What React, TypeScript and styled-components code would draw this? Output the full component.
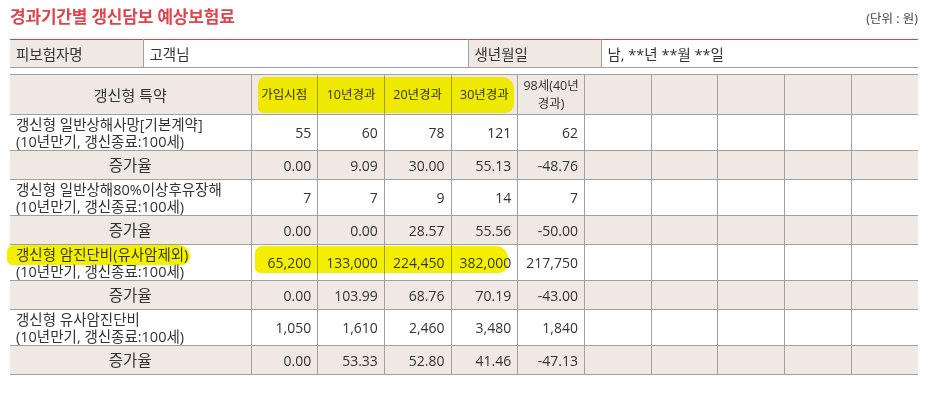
import React from "react";
import styled, { createGlobalStyle } from "styled-components";

const GlobalStyle = createGlobalStyle`
  body {
    margin: 0;
    background: #fff;
    font-family: "Open Sans", "Noto Sans CJK KR", sans-serif;
    color: #333;
  }
`;

const Page = styled.div`
  width: 908px;
  padding: 4px 28px 0 10px;
`;

const TitleBar = styled.div`
  display: flex;
  align-items: flex-end;
  justify-content: space-between;
  height: 24px;
  margin-bottom: 11px;
`;

const Title = styled.h2`
  margin: 0;
  font-size: 17px;
  font-weight: 700;
  color: #e0444b;
  letter-spacing: -0.2px;
`;

const Unit = styled.span`
  font-size: 12.5px;
  color: #444;
  padding-bottom: 1px;
`;

const InfoTable = styled.table`
  width: 908px;
  border-collapse: collapse;
  table-layout: fixed;
  border-top: 1px solid #d9434a;
  border-bottom: 1px solid #a0a0a0;
  margin-bottom: 6px;
`;

const InfoCell = styled.td<{ $label?: boolean }>`
  height: 27px;
  padding: 0 0 0 6px;
  font-size: 14.5px;
  background: ${(p) => (p.$label ? "#efe8e3" : "#fff")};
  border-left: 1px solid #a0a0a0;
  &:first-child {
    border-left: none;
  }
`;

const TableWrap = styled.div`
  position: relative;
`;

const Grid = styled.table`
  width: 908px;
  border-collapse: collapse;
  table-layout: fixed;
  border-top: 1px solid #d9434a;
  border-bottom: 1px solid #a0a0a0;
`;

const Cell = styled.td<{ $shade?: boolean; $align?: "left" | "center" | "right"; $h: number }>`
  height: ${(p) => p.$h}px;
  padding: 0 6px;
  box-sizing: border-box;
  background: ${(p) => (p.$shade ? "#efe8e3" : "#fff")};
  text-align: ${(p) => p.$align ?? "right"};
  border-top: 1px solid #a0a0a0;
  border-left: 1px solid #a0a0a0;
  font-size: 14px;
  line-height: 17px;
  vertical-align: middle;
  &:first-child {
    border-left: none;
  }
`;

const HeadCell = styled(Cell)`
  font-size: 12.5px;
  line-height: 18px;
  text-align: center;
  padding: 0 4px;
`;

const MainHead = styled(HeadCell)`
  font-size: 15px;
`;

const RateLabel = styled(Cell)`
  font-size: 15.5px;
  text-align: center;
`;

const Name = styled.div`
  font-size: 14.5px;
  line-height: 17px;
  white-space: nowrap;
`;

const Marker = styled.span<{ $l: number; $t: number; $w: number; $hh: number }>`
  position: absolute;
  left: ${(p) => p.$l}px;
  top: ${(p) => p.$t}px;
  width: ${(p) => p.$w}px;
  height: ${(p) => p.$hh}px;
  background: #f4ee00;
  mix-blend-mode: darken;
  border-radius: 7px 12px 9px 5px;
  pointer-events: none;
`;

type Row = { name: string; values: string[]; rates: string[] };

const heads = ["가입시점", "10년경과", "20년경과", "30년경과", "98세(40년 경과)"];

const rows: Row[] = [
  {
    name: "갱신형 일반상해사망[기본계약]",
    values: ["55", "60", "78", "121", "62"],
    rates: ["0.00", "9.09", "30.00", "55.13", "-48.76"],
  },
  {
    name: "갱신형 일반상해80%이상후유장해",
    values: ["7", "7", "9", "14", "7"],
    rates: ["0.00", "0.00", "28.57", "55.56", "-50.00"],
  },
  {
    name: "갱신형 암진단비(유사암제외)",
    values: ["65,200", "133,000", "224,450", "382,000", "217,750"],
    rates: ["0.00", "103.99", "68.76", "70.19", "-43.00"],
  },
  {
    name: "갱신형 유사암진단비",
    values: ["1,050", "1,610", "2,460", "3,480", "1,840"],
    rates: ["0.00", "53.33", "52.80", "41.46", "-47.13"],
  },
];

const blanks = [0, 1, 2, 3, 4];

export default function App(): JSX.Element {
  return (
    <>
      <GlobalStyle />
      <Page>
        <TitleBar>
          <Title>경과기간별 갱신담보 예상보험료</Title>
          <Unit>(단위 : 원)</Unit>
        </TitleBar>

        <InfoTable>
          <colgroup>
            <col style={{ width: 133 }} />
            <col style={{ width: 325 }} />
            <col style={{ width: 133 }} />
            <col />
          </colgroup>
          <tbody>
            <tr>
              <InfoCell $label>피보험자명</InfoCell>
              <InfoCell>고객님</InfoCell>
              <InfoCell $label>생년월일</InfoCell>
              <InfoCell>남, **년 **월 **일</InfoCell>
            </tr>
          </tbody>
        </InfoTable>

        <TableWrap>
          <Grid>
            <colgroup>
              <col style={{ width: 241 }} />
              {[...heads, ...blanks].map((_, i) => (
                <col key={i} />
              ))}
            </colgroup>
            <tbody>
              <tr>
                <MainHead $shade $h={40}>갱신형 특약</MainHead>
                {heads.map((h) => (
                  <HeadCell key={h} $shade $h={40}>
                    {h}
                  </HeadCell>
                ))}
                {blanks.map((b) => (
                  <HeadCell key={b} $shade $h={40} />
                ))}
              </tr>
              {rows.map((r) => (
                <React.Fragment key={r.name}>
                  <tr>
                    <Cell $align="left" $h={36}>
                      <Name>{r.name}</Name>
                      <Name>(10년만기, 갱신종료:100세)</Name>
                    </Cell>
                    {r.values.map((v, i) => (
                      <Cell key={i} $h={36}>
                        {v}
                      </Cell>
                    ))}
                    {blanks.map((b) => (
                      <Cell key={b} $h={36} />
                    ))}
                  </tr>
                  <tr>
                    <RateLabel $shade $h={29}>증가율</RateLabel>
                    {r.rates.map((v, i) => (
                      <Cell key={i} $shade $h={29}>
                        {v}
                      </Cell>
                    ))}
                    {blanks.map((b) => (
                      <Cell key={b} $shade $h={29} />
                    ))}
                  </tr>
                </React.Fragment>
              ))}
            </tbody>
          </Grid>
          <Marker $l={248} $t={3} $w={256} $hh={36} />
          <Marker $l={-3} $t={171} $w={183} $hh={20} />
          <Marker $l={245} $t={172} $w={253} $hh={27} />
        </TableWrap>
      </Page>
    </>
  );
}
